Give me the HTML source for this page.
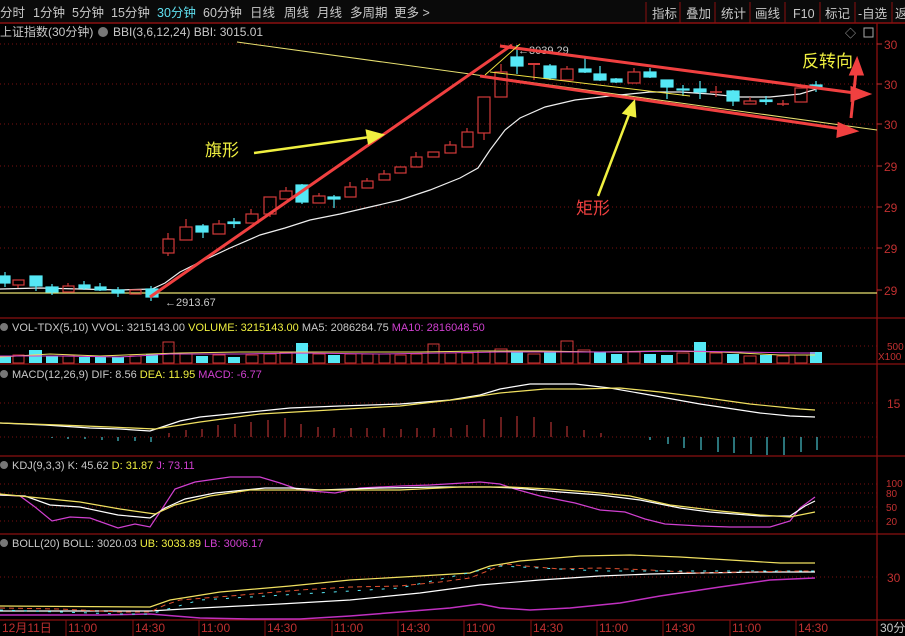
<!DOCTYPE html>
<html><head><meta charset="utf-8"><style>
html,body{margin:0;padding:0;background:#000;width:905px;height:636px;overflow:hidden}
body{font-family:"Liberation Sans","Noto Sans CJK SC",sans-serif}
svg{display:block}
</style></head><body>
<svg width="905" height="636" viewBox="0 0 905 636" xmlns="http://www.w3.org/2000/svg" font-family="Liberation Sans, Noto Sans CJK SC, sans-serif">
<rect width="905" height="636" fill="#000"/>
<!-- toolbar -->
<rect x="0" y="0" width="905" height="23" fill="#0a0a0a"/>
<line x1="0" y1="23" x2="905" y2="23" stroke="#8a1010" stroke-width="1.5"/>
<g font-size="12.5" fill="#c8c8c8">
<text x="0" y="17">分时</text><text x="33" y="17">1分钟</text><text x="72" y="17">5分钟</text><text x="111" y="17">15分钟</text>
<text x="157" y="17" fill="#5fe0f0">30分钟</text><text x="203" y="17">60分钟</text><text x="250" y="17">日线</text><text x="284" y="17">周线</text>
<text x="317" y="17">月线</text><text x="350" y="17">多周期</text><text x="394" y="17">更多 &gt;</text>
<text x="652" y="18">指标</text><text x="686" y="18">叠加</text><text x="721" y="18">统计</text><text x="755" y="18">画线</text><text x="793" y="18">F10</text><text x="825" y="18">标记</text><text x="858" y="18">-自选</text><text x="895" y="18">返</text>
</g>
<g stroke="#8a1010"><line x1="646" y1="2" x2="646" y2="23"/><line x1="680" y1="2" x2="680" y2="23"/><line x1="715" y1="2" x2="715" y2="23"/><line x1="750" y1="2" x2="750" y2="23"/><line x1="785" y1="2" x2="785" y2="23"/><line x1="820" y1="2" x2="820" y2="23"/><line x1="855" y1="2" x2="855" y2="23"/><line x1="892" y1="2" x2="892" y2="23"/></g>
<!-- frame -->
<g stroke="#8a1010" stroke-width="1.3">
<line x1="877" y1="23" x2="877" y2="636"/>
<line x1="0" y1="318" x2="905" y2="318"/><line x1="0" y1="364" x2="905" y2="364"/>
<line x1="0" y1="456" x2="905" y2="456"/><line x1="0" y1="534" x2="905" y2="534"/>
<line x1="0" y1="620" x2="905" y2="620"/>
</g>
<!-- dotted grid -->
<g stroke="#7a1010" stroke-dasharray="1,3">
<line x1="0" y1="44" x2="877" y2="44"/><line x1="0" y1="84" x2="877" y2="84"/><line x1="0" y1="124" x2="877" y2="124"/><line x1="0" y1="166" x2="877" y2="166"/><line x1="0" y1="207" x2="877" y2="207"/><line x1="0" y1="248" x2="877" y2="248"/>
<line x1="0" y1="346" x2="877" y2="346"/><line x1="0" y1="403" x2="877" y2="403"/><line x1="0" y1="437" x2="877" y2="437"/>
<line x1="0" y1="484" x2="877" y2="484"/><line x1="0" y1="493" x2="877" y2="493"/><line x1="0" y1="507" x2="877" y2="507"/><line x1="0" y1="521" x2="877" y2="521"/>
<line x1="0" y1="577" x2="877" y2="577"/>
</g>
<!-- right axis labels -->
<g font-size="12" fill="#c03030">
<text x="884" y="49">30</text><text x="884" y="89">30</text><text x="884" y="129">30</text><text x="884" y="171">29</text><text x="884" y="212">29</text><text x="884" y="253">29</text><text x="884" y="295">29</text>
<text x="887" y="350" font-size="10">500</text><text x="878" y="360" font-size="10">X100</text>
<text x="887" y="408">15</text>
<text x="886" y="487" font-size="10">100</text><text x="886" y="497" font-size="10">80</text><text x="886" y="511" font-size="10">50</text><text x="886" y="525" font-size="10">20</text>
<text x="887" y="582">30</text>
</g>
<g stroke="#c03030"><line x1="877" y1="44" x2="882" y2="44"/><line x1="877" y1="84" x2="882" y2="84"/><line x1="877" y1="124" x2="882" y2="124"/><line x1="877" y1="166" x2="882" y2="166"/><line x1="877" y1="207" x2="882" y2="207"/><line x1="877" y1="248" x2="882" y2="248"/><line x1="877" y1="290" x2="882" y2="290"/></g>
<!-- main header -->
<text x="0" y="36" font-size="12" fill="#c8c8c8">上证指数(30分钟)</text>
<circle cx="103" cy="32" r="5" fill="#777"/>
<text x="113" y="36" font-size="12" fill="#c8c8c8">BBI(3,6,12,24)  BBI: 3015.01</text>
<text x="845" y="37" font-size="11" fill="#aaa">◇</text><rect x="864" y="28" width="9" height="9" fill="none" stroke="#aaa"/>
<!-- baseline lines -->
<line x1="0" y1="293" x2="877" y2="293" stroke="#e8e070" stroke-width="1.2"/>
<line x1="237" y1="42" x2="877" y2="130" stroke="#e8e070" stroke-width="1"/>
<!-- BBI curve -->
<polyline fill="none" stroke="#eee" stroke-width="1.2" points="0,289 40,288 80,289 120,290 152,289 165,283 180,272 200,262 230,248 260,235 285,228 310,220 340,214 370,207 400,200 430,190 460,178 478,168 490,150 505,130 520,118 545,107 575,100 610,96 650,92 680,92 710,94 740,97 770,97 800,94 820,88"/>
<!-- candles -->
<g stroke-width="1.2">
<g stroke="#55e8f5" fill="#55e8f5">
<line x1="5" y1="272" x2="5" y2="287"/><rect x="0" y="276" width="10" height="7"/>
<line x1="36" y1="276" x2="36" y2="291"/><rect x="30" y="276" width="12" height="10"/>
<line x1="52" y1="284" x2="52" y2="295"/><rect x="46" y="287" width="12" height="5"/>
<line x1="84" y1="281" x2="84" y2="290"/><rect x="79" y="285" width="11" height="3"/>
<line x1="100" y1="283" x2="100" y2="291"/><rect x="95" y="287" width="11" height="3"/>
<line x1="118" y1="287" x2="118" y2="297"/><rect x="112" y="290" width="12" height="3"/>
<line x1="151" y1="286" x2="151" y2="301"/><rect x="146" y="289" width="12" height="8"/>
<line x1="203" y1="224" x2="203" y2="238"/><rect x="196" y="226" width="12" height="6"/>
<line x1="234" y1="218" x2="234" y2="228"/><rect x="228" y="222" width="12" height="1.5"/>
<line x1="302" y1="184" x2="302" y2="204"/><rect x="296" y="185" width="12" height="17"/>
<line x1="334" y1="195" x2="334" y2="208"/><rect x="328" y="197" width="12" height="2"/>
<line x1="517" y1="45" x2="517" y2="74"/><rect x="511" y="57" width="12" height="9"/>
<line x1="550" y1="64" x2="550" y2="80"/><rect x="544" y="66" width="12" height="12"/>
<line x1="585" y1="57" x2="585" y2="73"/><rect x="579" y="69" width="12" height="3"/>
<line x1="600" y1="66" x2="600" y2="81"/><rect x="594" y="74" width="12" height="6"/>
<line x1="616" y1="78" x2="616" y2="83"/><rect x="611" y="79" width="11" height="3"/>
<line x1="650" y1="68" x2="650" y2="78"/><rect x="644" y="72" width="12" height="5"/>
<line x1="667" y1="80" x2="667" y2="99"/><rect x="661" y="80" width="12" height="7"/>
<line x1="683" y1="85" x2="683" y2="96"/><rect x="677" y="89" width="12" height="1"/>
<line x1="700" y1="81" x2="700" y2="99"/><rect x="694" y="89" width="12" height="3"/>
<line x1="733" y1="90" x2="733" y2="106"/><rect x="727" y="91" width="12" height="10"/>
<line x1="766" y1="96" x2="766" y2="105"/><rect x="760" y="100" width="12" height="1.5"/>
<line x1="816" y1="81" x2="816" y2="92"/><rect x="810" y="85" width="12" height="3"/>
</g>
<g stroke="#d23a3a" fill="none">
<rect x="13" y="280" width="11" height="5"/><line x1="18" y1="285" x2="18" y2="288"/>
<rect x="63" y="286" width="11" height="6"/><line x1="68" y1="283" x2="68" y2="286"/>
<rect x="130" y="290" width="11" height="4"/>
<rect x="163" y="239" width="11" height="14"/><line x1="168" y1="233" x2="168" y2="239"/><line x1="168" y1="253" x2="168" y2="256"/>
<rect x="180" y="227" width="12" height="13"/><line x1="186" y1="219" x2="186" y2="227"/>
<rect x="213" y="224" width="12" height="10"/><line x1="219" y1="220" x2="219" y2="224"/>
<rect x="246" y="214" width="12" height="9"/><line x1="251" y1="209" x2="251" y2="214"/>
<rect x="264" y="197" width="12" height="17"/><line x1="270" y1="214" x2="270" y2="217"/>
<rect x="280" y="191" width="12" height="8"/><line x1="286" y1="187" x2="286" y2="191"/>
<rect x="313" y="196" width="12" height="7"/><line x1="319" y1="193" x2="319" y2="196"/>
<rect x="345" y="187" width="11" height="10"/><line x1="350" y1="182" x2="350" y2="187"/>
<rect x="362" y="181" width="11" height="7"/><line x1="367" y1="178" x2="367" y2="181"/>
<rect x="379" y="174" width="11" height="6"/><line x1="384" y1="170" x2="384" y2="174"/>
<rect x="395" y="167" width="11" height="6"/>
<rect x="411" y="157" width="11" height="10"/><line x1="416" y1="152" x2="416" y2="157"/>
<rect x="428" y="152" width="11" height="5"/>
<rect x="445" y="145" width="11" height="8"/><line x1="450" y1="141" x2="450" y2="145"/>
<rect x="462" y="132" width="11" height="15"/><line x1="467" y1="128" x2="467" y2="132"/>
<rect x="478" y="97" width="12" height="36"/><line x1="484" y1="133" x2="484" y2="140"/>
<rect x="495" y="72" width="12" height="25"/><line x1="501" y1="64" x2="501" y2="72"/>
<line x1="528" y1="64" x2="540" y2="64" stroke-width="2"/><line x1="534" y1="64" x2="534" y2="80"/>
<rect x="561" y="69" width="12" height="11"/><line x1="567" y1="66" x2="567" y2="69"/>
<rect x="628" y="72" width="12" height="11"/><line x1="634" y1="68" x2="634" y2="72"/>
<line x1="710" y1="92" x2="722" y2="92" stroke-width="1.5"/><line x1="716" y1="86" x2="716" y2="97"/>
<rect x="744" y="101" width="12" height="3"/><line x1="750" y1="97" x2="750" y2="101"/>
<line x1="777" y1="104" x2="789" y2="104" stroke-width="1.5"/><line x1="783" y1="100" x2="783" y2="106"/>
<rect x="795" y="88" width="12" height="14"/>
</g>
</g>
<text x="165" y="306" font-size="11" fill="#c8c8c8">←2913.67</text>
<text x="518" y="54" font-size="11" fill="#c8c8c8">←3039.29</text>
<!-- annotations -->
<g stroke="#f04040" stroke-width="3" fill="#f04040">
<line x1="150" y1="297" x2="512" y2="45"/>
<line x1="500" y1="46" x2="855" y2="93"/><polygon points="868,94 852,88 852,100"/>
<line x1="480" y1="76" x2="842" y2="129"/><polygon points="855,131 839,124 838,136"/>
<line x1="851" y1="118" x2="856" y2="72"/><polygon points="857,60 851,74 862,74"/>
</g>
<line x1="485" y1="75" x2="520" y2="44" stroke="#f0e040" stroke-width="1"/>
<line x1="490" y1="72" x2="690" y2="96" stroke="#f0e040" stroke-width="1"/>
<g stroke="#f0f040" stroke-width="2.5" fill="#f0f040">
<line x1="254" y1="153" x2="370" y2="137"/><polygon points="382,135 367,131 369,143"/>
<line x1="598" y1="196" x2="630" y2="112"/><polygon points="634,102 624,113 635,116"/>
</g>
<text x="205" y="156" font-size="17" fill="#f0f040">旗形</text>
<text x="576" y="214" font-size="17" fill="#f04040">矩形</text>
<text x="802" y="67" font-size="17" fill="#f0f040">反转向</text>
<!-- VOL -->
<circle cx="4" cy="327" r="4" fill="#777"/>
<text x="12" y="331" font-size="11"><tspan fill="#c8c8c8">VOL-TDX(5,10) VVOL: 3215143.00 </tspan><tspan fill="#f0f040"> VOLUME: 3215143.00 </tspan><tspan fill="#c8c8c8"> MA5: 2086284.75 </tspan><tspan fill="#d040d0"> MA10: 2816048.50</tspan></text>
<g fill="#55e8f5">
<rect x="0" y="356" width="11" height="7"/><rect x="29" y="350" width="13" height="13"/><rect x="46" y="356" width="12" height="7"/><rect x="79" y="357" width="11" height="6"/><rect x="95" y="357" width="11" height="6"/><rect x="112" y="357" width="12" height="6"/><rect x="146" y="354" width="12" height="9"/><rect x="196" y="356" width="12" height="7"/><rect x="228" y="357" width="12" height="6"/><rect x="296" y="343" width="12" height="20"/><rect x="328" y="355" width="12" height="8"/><rect x="511" y="351" width="12" height="12"/><rect x="544" y="351" width="12" height="12"/><rect x="594" y="352" width="12" height="11"/><rect x="611" y="354" width="11" height="9"/><rect x="644" y="354" width="12" height="9"/><rect x="661" y="355" width="12" height="8"/><rect x="694" y="342" width="12" height="21"/><rect x="727" y="354" width="12" height="9"/><rect x="760" y="355" width="12" height="8"/><rect x="810" y="352" width="12" height="11"/>
</g>
<g stroke="#d23a3a" fill="none">
<rect x="13" y="355" width="11" height="8"/><rect x="63" y="356" width="11" height="7"/><rect x="130" y="356" width="11" height="7"/><rect x="163" y="342" width="11" height="21"/><rect x="180" y="354" width="12" height="9"/><rect x="213" y="355" width="12" height="8"/><rect x="246" y="355" width="12" height="8"/><rect x="264" y="354" width="12" height="9"/><rect x="280" y="353" width="12" height="10"/><rect x="313" y="354" width="12" height="9"/><rect x="345" y="354" width="11" height="9"/><rect x="362" y="354" width="11" height="9"/><rect x="379" y="354" width="11" height="9"/><rect x="395" y="355" width="11" height="8"/><rect x="411" y="354" width="11" height="9"/><rect x="428" y="344" width="11" height="19"/><rect x="445" y="353" width="11" height="10"/><rect x="462" y="353" width="11" height="10"/><rect x="478" y="351" width="12" height="12"/><rect x="495" y="349" width="12" height="14"/><rect x="528" y="354" width="12" height="9"/><rect x="561" y="341" width="12" height="22"/><rect x="578" y="350" width="12" height="13"/><rect x="628" y="352" width="12" height="11"/><rect x="677" y="353" width="12" height="10"/><rect x="710" y="353" width="12" height="10"/><rect x="744" y="356" width="12" height="7"/><rect x="777" y="356" width="12" height="7"/><rect x="795" y="355" width="12" height="8"/>
</g>
<polyline fill="none" stroke="#f0e060" points="0,357 50,354 100,356 150,354 180,353 240,352 300,352 360,352 420,352 480,351 540,351 600,352 660,351 720,352 780,355 815,355"/>
<polyline fill="none" stroke="#d040d0" points="0,356 60,356 120,357 170,354 240,354 300,353 380,354 440,353 500,352 560,352 620,352 680,351 740,352 800,353 815,353"/>
<!-- MACD -->
<circle cx="4" cy="374" r="4" fill="#777"/>
<text x="12" y="378" font-size="11"><tspan fill="#c8c8c8">MACD(12,26,9) DIF: 8.56 </tspan><tspan fill="#f0f040"> DEA: 11.95 </tspan><tspan fill="#d040d0"> MACD: -6.77</tspan></text>
<polyline fill="none" stroke="#fff" stroke-width="1.2" points="0,423 45,425 90,428 120,429 150,431 165,426 180,421 200,417 240,413 290,408 340,406 400,404 450,400 480,395 500,389 530,384 575,384 610,388 650,395 700,404 760,413 790,416 815,417"/>
<polyline fill="none" stroke="#f0e060" stroke-width="1.2" points="0,423 60,425 110,427 155,429 200,422 260,414 330,410 400,406 460,399 500,393 545,389 580,389 620,388 660,392 700,397 750,404 800,409 815,410"/>
<g stroke="#d23a3a">
<line x1="169" y1="437" x2="169" y2="433"/><line x1="186" y1="437" x2="186" y2="430"/><line x1="202" y1="437" x2="202" y2="429"/><line x1="218" y1="437" x2="218" y2="425"/><line x1="235" y1="437" x2="235" y2="424"/><line x1="251" y1="437" x2="251" y2="422"/><line x1="268" y1="437" x2="268" y2="420"/><line x1="285" y1="437" x2="285" y2="418"/><line x1="301" y1="437" x2="301" y2="424"/><line x1="318" y1="437" x2="318" y2="427"/><line x1="334" y1="437" x2="334" y2="428"/><line x1="351" y1="437" x2="351" y2="428"/><line x1="367" y1="437" x2="367" y2="428"/><line x1="384" y1="437" x2="384" y2="428"/><line x1="401" y1="437" x2="401" y2="429"/><line x1="417" y1="437" x2="417" y2="428"/><line x1="434" y1="437" x2="434" y2="428"/><line x1="451" y1="437" x2="451" y2="428"/><line x1="467" y1="437" x2="467" y2="425"/><line x1="484" y1="437" x2="484" y2="419"/><line x1="501" y1="437" x2="501" y2="417"/><line x1="517" y1="437" x2="517" y2="416"/><line x1="534" y1="437" x2="534" y2="417"/><line x1="551" y1="437" x2="551" y2="422"/><line x1="567" y1="437" x2="567" y2="426"/><line x1="584" y1="437" x2="584" y2="430"/><line x1="601" y1="437" x2="601" y2="433"/>
</g>
<g stroke="#55e8f5">
<line x1="52" y1="437" x2="52" y2="438"/><line x1="68" y1="437" x2="68" y2="439"/><line x1="85" y1="437" x2="85" y2="439"/><line x1="102" y1="437" x2="102" y2="440"/><line x1="118" y1="437" x2="118" y2="441"/><line x1="135" y1="437" x2="135" y2="441"/><line x1="151" y1="437" x2="151" y2="442"/>
<line x1="650" y1="437" x2="650" y2="440"/><line x1="668" y1="437" x2="668" y2="444"/><line x1="684" y1="437" x2="684" y2="448"/><line x1="701" y1="437" x2="701" y2="450"/><line x1="718" y1="437" x2="718" y2="452"/><line x1="734" y1="437" x2="734" y2="453"/><line x1="751" y1="437" x2="751" y2="454"/><line x1="767" y1="437" x2="767" y2="455"/><line x1="784" y1="437" x2="784" y2="455"/><line x1="801" y1="437" x2="801" y2="452"/><line x1="817" y1="437" x2="817" y2="450"/>
</g>
<!-- KDJ -->
<circle cx="4" cy="465" r="4" fill="#777"/>
<text x="12" y="469" font-size="11"><tspan fill="#c8c8c8">KDJ(9,3,3) K: 45.62 </tspan><tspan fill="#f0f040"> D: 31.87 </tspan><tspan fill="#d040d0"> J: 73.11</tspan></text>
<polyline fill="none" stroke="#d040d0" stroke-width="1.2" points="0,495 20,496 35,507 52,521 70,517 90,518 118,528 135,524 150,527 160,512 175,489 195,482 230,477 260,477 280,483 300,490 335,493 360,488 400,486 430,485 480,482 500,484 515,489 540,496 575,503 600,510 625,512 645,519 665,524 700,526 730,527 770,527 790,521 800,508 815,497"/>
<polyline fill="none" stroke="#fff" stroke-width="1.2" points="0,495 25,496 50,505 80,507 118,515 150,518 165,508 185,499 215,493 265,488 290,488 320,490 350,489 380,488 440,487 490,487 515,488 560,492 600,495 640,500 680,508 710,512 760,516 790,516 805,506 815,501"/>
<polyline fill="none" stroke="#f0e060" stroke-width="1.2" points="0,494 30,497 80,502 120,509 155,514 175,505 210,496 250,490 300,490 340,490 400,490 460,487 510,487 550,489 590,492 630,496 670,505 720,511 760,515 790,517 815,512"/>
<!-- BOLL -->
<circle cx="4" cy="543" r="4" fill="#777"/>
<text x="12" y="547" font-size="11"><tspan fill="#c8c8c8">BOLL(20) BOLL: 3020.03 </tspan><tspan fill="#f0f040"> UB: 3033.89 </tspan><tspan fill="#d040d0"> LB: 3006.17</tspan></text>
<polyline fill="none" stroke="#f0e060" stroke-width="1.2" points="0,606 150,607 170,600 220,592 290,586 350,580 420,576 470,573 490,566 520,561 580,556 630,555 680,557 730,560 780,563 815,563"/>
<polyline fill="none" stroke="#fff" stroke-width="1.2" points="0,611 150,611 200,608 280,604 350,600 420,593 480,585 540,580 600,576 650,574 700,573 760,572 815,572"/>
<polyline fill="none" stroke="#c030c0" stroke-width="1.5" points="0,615 100,615 150,614 200,618 250,619 300,619 350,616 400,612 450,608 480,604 500,608 530,610 570,608 620,603 660,596 720,587 770,580 815,578"/>
<polyline fill="none" stroke="#e05030" stroke-dasharray="5,4" points="0,608 60,609 120,612 150,612 165,605 180,600 230,596 300,590 350,587 400,586 440,582 470,578 490,570 505,564 525,566 560,569 600,568 650,570 700,573 740,572 800,571 815,571"/>
<polyline fill="none" stroke="#55e8f5" stroke-dasharray="3,9" points="0,610 60,612 120,614 150,614 200,600 300,594 400,588 500,566 600,571 700,571 815,571"/>
<!-- time axis -->
<g font-size="12" fill="#c03030">
<text x="2" y="632">12月11日</text><text x="68" y="632">11:00</text><text x="135" y="632">14:30</text><text x="201" y="632">11:00</text><text x="267" y="632">14:30</text><text x="334" y="632">11:00</text><text x="400" y="632">14:30</text><text x="466" y="632">11:00</text><text x="533" y="632">14:30</text><text x="599" y="632">11:00</text><text x="665" y="632">14:30</text><text x="732" y="632">11:00</text><text x="798" y="632">14:30</text>
<text x="880" y="632" fill="#c8c8c8">30分</text>
</g>
<g stroke="#8a1010"><line x1="66" y1="620" x2="66" y2="636"/><line x1="133" y1="620" x2="133" y2="636"/><line x1="199" y1="620" x2="199" y2="636"/><line x1="265" y1="620" x2="265" y2="636"/><line x1="332" y1="620" x2="332" y2="636"/><line x1="398" y1="620" x2="398" y2="636"/><line x1="464" y1="620" x2="464" y2="636"/><line x1="531" y1="620" x2="531" y2="636"/><line x1="597" y1="620" x2="597" y2="636"/><line x1="663" y1="620" x2="663" y2="636"/><line x1="730" y1="620" x2="730" y2="636"/><line x1="796" y1="620" x2="796" y2="636"/></g>
</svg>
</body></html>
